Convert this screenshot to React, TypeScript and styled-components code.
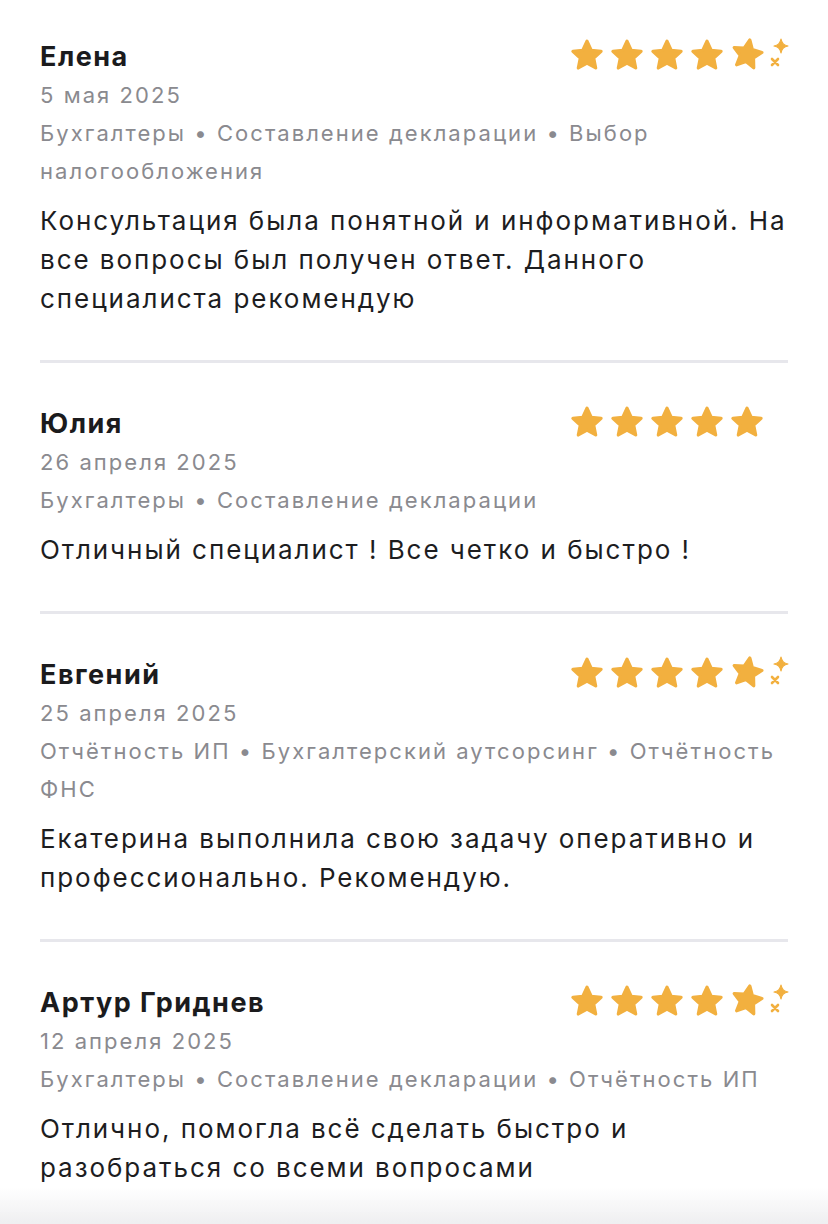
import React from "react";
import styled, { createGlobalStyle } from "styled-components";

const GlobalStyle = createGlobalStyle`
  html, body {
    margin: 0;
    padding: 0;
    background: #ffffff;
  }
  body {
    font-family: Inter, "Noto Sans", "Liberation Sans", sans-serif;
    -webkit-font-smoothing: antialiased;
  }
`;

const STAR_COLOR = "#f2b03f";

const Page = styled.div`
  padding: 0 40px;
  box-sizing: border-box;
  width: 828px;
`;

const Review = styled.article`
  padding: 42px 0;
  border-bottom: 3px solid #e7e7ec;

  &:first-child {
    padding-top: 38px;
  }
  &:last-child {
    border-bottom: none;
  }
`;

const Header = styled.div`
  display: flex;
  justify-content: space-between;
  align-items: flex-start;
`;

const Name = styled.div`
  font-size: 27px;
  line-height: 38px;
  font-weight: 700;
  color: #1b1b1d;
  letter-spacing: 1.5px;
`;

const Meta = styled.div`
  font-size: 22px;
  line-height: 38px;
  color: #8a8a8f;
  letter-spacing: 2.05px;
`;

const Body = styled.p`
  margin: 11px 0 0;
  font-size: 26px;
  line-height: 39px;
  color: #1d1d1f;
  letter-spacing: 1.95px;
`;

const StarRow = styled.div`
  display: flex;
  align-items: center;
  margin-top: -2px;
  margin-right: -2px;
`;

const StarSvg = styled.svg`
  display: block;
  width: 40px;
  height: 38px;
`;

const SparkleSlot = styled.svg`
  display: block;
  width: 23px;
  height: 38px;
`;

function starPoints(cx: number, cy: number, R: number, r: number) {
  const pts: string[] = [];
  for (let i = 0; i < 10; i++) {
    const rad = i % 2 === 0 ? R : r;
    const a = (Math.PI / 5) * i - Math.PI / 2;
    pts.push(`${(cx + rad * Math.cos(a)).toFixed(2)},${(cy + rad * Math.sin(a)).toFixed(2)}`);
  }
  return pts.join(" ");
}

const STAR = starPoints(20, 20, 14.8, 7.1);

const Star: React.FC<{ tilt?: number }> = ({ tilt = 0 }) => (
  <StarSvg viewBox="0 0 40 38">
    <polygon
      points={STAR}
      fill={STAR_COLOR}
      stroke={STAR_COLOR}
      strokeWidth={3.2}
      strokeLinejoin="round"
      transform={tilt ? `rotate(${tilt} 20 20) translate(0 -1.5)` : undefined}
    />
  </StarSvg>
);

const Sparkles: React.FC<{ show: boolean }> = ({ show }) => (
  <SparkleSlot viewBox="0 0 23 38">
    {show && (
      <>
        <path
          d="M14 3 Q15 9 21 10 Q15 11 14 17 Q13 11 7 10 Q13 9 14 3 Z"
          fill={STAR_COLOR}
          stroke={STAR_COLOR}
          strokeWidth={1.2}
          strokeLinejoin="round"
        />
        <path
          d="M5 23 L11 29 M11 23 L5 29"
          stroke={STAR_COLOR}
          strokeWidth={2.6}
          strokeLinecap="round"
        />
      </>
    )}
  </SparkleSlot>
);

const Rating: React.FC<{ sparkle: boolean }> = ({ sparkle }) => (
  <StarRow>
    <Star />
    <Star />
    <Star />
    <Star />
    <Star tilt={sparkle ? 10 : 0} />
    <Sparkles show={sparkle} />
  </StarRow>
);

const BottomFade = styled.div`
  position: fixed;
  left: 0;
  right: 0;
  bottom: 0;
  height: 36px;
  background: linear-gradient(to bottom, rgba(242, 242, 244, 0), #eeeef0);
  pointer-events: none;
`;

interface ReviewData {
  name: string;
  date: string;
  tags: string[];
  text: string;
  sparkle: boolean;
}

const reviews: ReviewData[] = [
  {
    name: "Елена",
    date: "5 мая 2025",
    tags: ["Бухгалтеры", "Составление декларации", "Выбор налогообложения"],
    text: "Консультация была понятной и информативной. На все вопросы был получен ответ. Данного специалиста рекомендую",
    sparkle: true,
  },
  {
    name: "Юлия",
    date: "26 апреля 2025",
    tags: ["Бухгалтеры", "Составление декларации"],
    text: "Отличный специалист ! Все четко и быстро !",
    sparkle: false,
  },
  {
    name: "Евгений",
    date: "25 апреля 2025",
    tags: ["Отчётность ИП", "Бухгалтерский аутсорсинг", "Отчётность ФНС"],
    text: "Екатерина выполнила свою задачу оперативно и профессионально. Рекомендую.",
    sparkle: true,
  },
  {
    name: "Артур Гриднев",
    date: "12 апреля 2025",
    tags: ["Бухгалтеры", "Составление декларации", "Отчётность ИП"],
    text: "Отлично, помогла всё сделать быстро и разобраться со всеми вопросами",
    sparkle: true,
  },
];

export default function App() {
  return (
    <>
      <GlobalStyle />
      <Page>
        {reviews.map((r) => (
          <Review key={r.name}>
            <Header>
              <div>
                <Name>{r.name}</Name>
                <Meta>{r.date}</Meta>
              </div>
              <Rating sparkle={r.sparkle} />
            </Header>
            <Meta>{r.tags.join(" • ")}</Meta>
            <Body>{r.text}</Body>
          </Review>
        ))}
      </Page>
      <BottomFade />
    </>
  );
}
